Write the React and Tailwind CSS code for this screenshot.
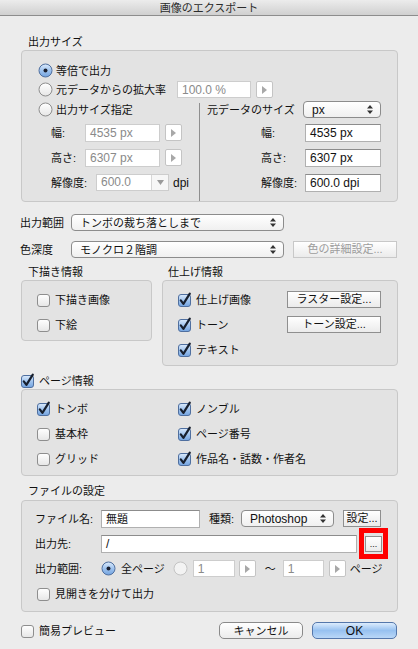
import React from 'react'

const FONT = "font-['Liberation_Sans','Noto_Sans_CJK_JP',sans-serif]"

function Defs() {
  return (
    <svg width="0" height="0" className="absolute">
      <defs>
        <linearGradient id="gBlue" x1="0" y1="0" x2="0" y2="1">
          <stop offset="0" stopColor="#dcebfc" />
          <stop offset="0.5" stopColor="#9fc3ee" />
          <stop offset="1" stopColor="#73a3df" />
        </linearGradient>
        <linearGradient id="gWhite" x1="0" y1="0" x2="0" y2="1">
          <stop offset="0" stopColor="#ffffff" />
          <stop offset="1" stopColor="#e6e6e6" />
        </linearGradient>
      </defs>
    </svg>
  )
}

function CheckBox({ on }) {
  return (
    <svg width="14" height="14" viewBox="0 0 14 14" className="shrink-0 overflow-visible">
      <rect x="0.5" y="1.5" width="12" height="12" rx="2.5"
        fill={on ? 'url(#gBlue)' : 'url(#gWhite)'} stroke={on ? '#4f6f9f' : '#8e8e8e'} />
      {on && (
        <path d="M2.8 7.4 L5.4 10.8 L11.8 0.6" fill="none" stroke="#18202e"
          strokeWidth="2.2" strokeLinecap="round" strokeLinejoin="round" />
      )}
    </svg>
  )
}

function Radio({ on, dim }) {
  return (
    <svg width="15" height="15" viewBox="0 0 15 15" className="shrink-0">
      <circle cx="7.5" cy="7.5" r="6.5"
        fill={on ? 'url(#gBlue)' : dim ? '#f3f3f3' : 'url(#gWhite)'}
        stroke={on ? '#4f6f9f' : dim ? '#c4c4c4' : '#8e8e8e'} />
      {on && <circle cx="7.5" cy="7.5" r="2" fill="#1b2030" />}
    </svg>
  )
}

function Field({ w, value, dim, h = 'h-[18px]', cjk }) {
  return (
    <div className={`${w} ${h} shrink-0 bg-white border ${dim ? 'border-[#cdcdcd]' : 'border-[#b0b0b0] border-t-[#8c8c8c]'} flex items-center px-[4px] ${cjk ? 'text-[11px]' : 'text-[12px]'} ${dim ? 'text-[#8a8a8a]' : 'text-[#111]'}`}>
      {value}
    </div>
  )
}

function Stepper() {
  return (
    <div className="w-[17px] h-[17px] shrink-0 border border-[#c4c4c4] rounded-[2px] bg-white flex items-center justify-center">
      <svg width="5" height="8" viewBox="0 0 5 8"><path d="M0 0 L5 4 L0 8Z" fill="#a8a8a8" /></svg>
    </div>
  )
}

function UpDown() {
  return (
    <svg width="6" height="9" viewBox="0 0 6 9" className="shrink-0">
      <path d="M3 0 L6 3.4 H0Z M0 5.6 H6 L3 9Z" fill="#333" />
    </svg>
  )
}

function Popup({ w, value, cjk }) {
  return (
    <div className={`${w} h-[17px] shrink-0 rounded-[4px] border border-[#8c8c8c] bg-gradient-to-b from-white to-[#f0f0f0] flex items-center justify-between pl-[8px] pr-[7px] ${cjk ? 'text-[11px]' : 'text-[12px]'}`}>
      <span>{value}</span>
      <UpDown />
    </div>
  )
}

function SqBtn({ w, children, dim }) {
  return (
    <div className={`${w} h-[17px] shrink-0 border ${dim ? 'border-[#c8c8c8] text-[#9c9c9c]' : 'border-[#8f8f8f] text-[#111]'} bg-gradient-to-b from-white to-[#ebebeb] flex items-center justify-center text-[11px] leading-none`}>
      {children}
    </div>
  )
}

function Check({ on, label }) {
  return (
    <div className="flex items-center gap-[4px]">
      <CheckBox on={on} />
      <span>{label}</span>
    </div>
  )
}

export default function App() {
  const box = 'border border-[#c8c8c8] rounded-[4px] bg-[#e3e3e3]'

  return (
    <div className={`w-[418px] h-[649px] bg-[#ececec] overflow-hidden text-[#111] text-[11px] leading-[14px] ${FONT}`}>
      <Defs />

      {/* Title bar */}
      <div className="h-[16px] border-b border-[#8d8d8d] bg-gradient-to-b from-[#ececec] to-[#d0d0d0] flex items-center justify-center text-[#2b2b2b]">
        画像のエクスポート
      </div>

      <div className="pl-[21px] w-[398px]">
        {/* 出力サイズ */}
        <div className="h-[34px] flex items-end pb-[1px] pl-[7px]">出力サイズ</div>
        <div className={`w-[377px] h-[152px] pt-[10px] ${box}`}>
          <div className="h-[19px] flex items-center pl-[16px] gap-[3px]">
            <Radio on />
            <span>等倍で出力</span>
          </div>
          <div className="h-[19px] flex items-center pl-[16px]">
            <Radio />
            <span className="ml-[3px] w-[121px]">元データからの拡大率</span>
            <Field w="w-[74px]" h="h-[17px]" dim value="100.0 %" />
            <div className="ml-[5px]"><Stepper /></div>
          </div>

          <div className="flex h-[102px]">
            <div className="w-[177px]">
              <div className="h-[21px] flex items-center pl-[16px] gap-[3px]">
                <Radio />
                <span>出力サイズ指定</span>
              </div>
              <div className="h-[25px] flex items-center pl-[29px]">
                <span className="w-[34px]">幅:</span>
                <Field w="w-[75px]" dim value="4535 px" />
                <div className="ml-[5px]"><Stepper /></div>
              </div>
              <div className="h-[25px] flex items-center pl-[29px]">
                <span className="w-[34px]">高さ:</span>
                <Field w="w-[75px]" dim value="6307 px" />
                <div className="ml-[5px]"><Stepper /></div>
              </div>
              <div className="h-[25px] flex items-center pl-[29px]">
                <span className="w-[45px]">解像度:</span>
                <div className="w-[73px] h-[17px] flex border border-[#cdcdcd] bg-white">
                  <span className="flex-1 px-[4px] text-[12px] text-[#8a8a8a] leading-[15px]">600.0</span>
                  <span className="w-[17px] border-l border-[#d6d6d6] bg-[#f6f6f6] flex items-center justify-center">
                    <svg width="7" height="5" viewBox="0 0 7 5"><path d="M0 0 H7 L3.5 5Z" fill="#9a9a9a" /></svg>
                  </span>
                </div>
                <span className="ml-[4px] text-[12px]">dpi</span>
              </div>
            </div>
            <div className="w-px bg-[#8f8f8f] mt-[4px]" />
            <div className="flex-1">
              <div className="h-[21px] flex items-center pl-[7px]">
                <span className="w-[96px]">元データのサイズ</span>
                <Popup w="w-[78px]" value="px" />
              </div>
              <div className="h-[25px] flex items-center pl-[61px]">
                <span className="w-[44px]">幅:</span>
                <Field w="w-[76px]" value="4535 px" />
              </div>
              <div className="h-[25px] flex items-center pl-[61px]">
                <span className="w-[44px]">高さ:</span>
                <Field w="w-[76px]" value="6307 px" />
              </div>
              <div className="h-[25px] flex items-center pl-[61px]">
                <span className="w-[44px]">解像度:</span>
                <Field w="w-[76px]" value="600.0 dpi" />
              </div>
            </div>
          </div>
        </div>

        {/* 出力範囲 / 色深度 */}
        <div className="mt-[12px] h-[17px] flex items-center -ml-px">
          <span className="w-[51px]">出力範囲</span>
          <Popup w="w-[213px]" cjk value="トンボの裁ち落としまで" />
        </div>
        <div className="mt-[10px] h-[17px] flex items-center -ml-px">
          <span className="w-[51px]">色深度</span>
          <Popup w="w-[213px]" cjk value="モノクロ２階調" />
          <div className="ml-[9px]"><SqBtn w="w-[104px]" dim>色の詳細設定...</SqBtn></div>
        </div>

        {/* 下描き情報 / 仕上げ情報 */}
        <div className="mt-[7px] flex gap-[10px] items-start">
          <div className="w-[131px]">
            <div className="h-[14px] pl-[7px]">下描き情報</div>
            <div className={`mt-px h-[61px] pt-[6px] pl-[15px] ${box}`}>
              <div className="h-[25px] flex items-center"><Check label="下描き画像" /></div>
              <div className="h-[25px] flex items-center"><Check label="下絵" /></div>
            </div>
          </div>
          <div className="w-[236px]">
            <div className="h-[14px] pl-[6px]">仕上げ情報</div>
            <div className={`mt-px h-[86px] pt-[6px] pl-[15px] pr-[16px] ${box}`}>
              <div className="h-[25px] flex items-center justify-between">
                <Check on label="仕上げ画像" />
                <SqBtn w="w-[94px]">ラスター設定...</SqBtn>
              </div>
              <div className="h-[25px] flex items-center justify-between">
                <Check on label="トーン" />
                <SqBtn w="w-[94px]">トーン設定...</SqBtn>
              </div>
              <div className="h-[25px] flex items-center"><Check on label="テキスト" /></div>
            </div>
          </div>
        </div>

        {/* ページ情報 */}
        <div className="mt-[8px] h-[14px] flex items-center">
          <Check on label="ページ情報" />
        </div>
        <div className={`mt-px w-[377px] h-[87px] pt-[6px] pl-[15px] grid grid-cols-[141px_1fr] auto-rows-[25px] items-center ${box}`}>
          <Check on label="トンボ" />
          <Check on label="ノンブル" />
          <Check label="基本枠" />
          <Check on label="ページ番号" />
          <Check label="グリッド" />
          <Check on label="作品名・話数・作者名" />
        </div>

        {/* ファイルの設定 */}
        <div className="mt-[8px] h-[14px] pl-[7px]">ファイルの設定</div>
        <div className={`mt-[2px] w-[377px] h-[112px] pt-[5px] pl-[13px] ${box}`}>
          <div className="h-[25px] flex items-center">
            <span className="w-[66px]">ファイル名:</span>
            <Field w="w-[99px]" cjk value="無題" />
            <span className="ml-[9px] w-[32px]">種類:</span>
            <Popup w="w-[93px]" value="Photoshop" />
            <div className="ml-[9px]"><SqBtn w="w-[38px]">設定...</SqBtn></div>
          </div>
          <div className="h-[25px] flex items-center">
            <span className="w-[66px]">出力先:</span>
            <Field w="w-[256px]" value="/" />
            <div className="ml-[2px] w-[29px] h-[31px] shrink-0 border-[5px] border-[#ff0000] flex items-center justify-center">
              <div className="w-[17px] h-[16px] border border-[#8f8f8f] bg-gradient-to-b from-white to-[#ebebeb] flex items-end justify-center pb-[2px] text-[9px] leading-none">...</div>
            </div>
          </div>
          <div className="h-[25px] flex items-center">
            <span className="w-[66px]">出力範囲:</span>
            <Radio on />
            <span className="ml-[5px]">全ページ</span>
            <div className="ml-[8px]"><Radio dim /></div>
            <div className="ml-[5px]"><Field w="w-[42px]" h="h-[17px]" dim value="1" /></div>
            <div className="ml-[4px]"><Stepper /></div>
            <span className="ml-[9px]">〜</span>
            <div className="ml-[7px]"><Field w="w-[41px]" h="h-[17px]" dim value="1" /></div>
            <div className="ml-[5px]"><Stepper /></div>
            <span className="ml-[4px]">ページ</span>
          </div>
          <div className="h-[25px] flex items-center pl-[2px]">
            <Check label="見開きを分けて出力" />
          </div>
        </div>

        {/* Bottom buttons */}
        <div className="mt-[10px] h-[17px] flex items-center">
          <Check label="簡易プレビュー" />
          <div className="ml-auto mr-px flex gap-[9px]">
            <div className="w-[84px] h-[17px] rounded-[5px] border border-[#8a8a8a] bg-gradient-to-b from-white to-[#ececec] flex items-center justify-center">キャンセル</div>
            <div className="w-[85px] h-[17px] rounded-[5px] border border-[#5477ab] bg-gradient-to-b from-[#dcecfd] via-[#97c1f0] to-[#b9d7f7] flex items-center justify-center text-[12px]">OK</div>
          </div>
        </div>
      </div>
    </div>
  )
}
